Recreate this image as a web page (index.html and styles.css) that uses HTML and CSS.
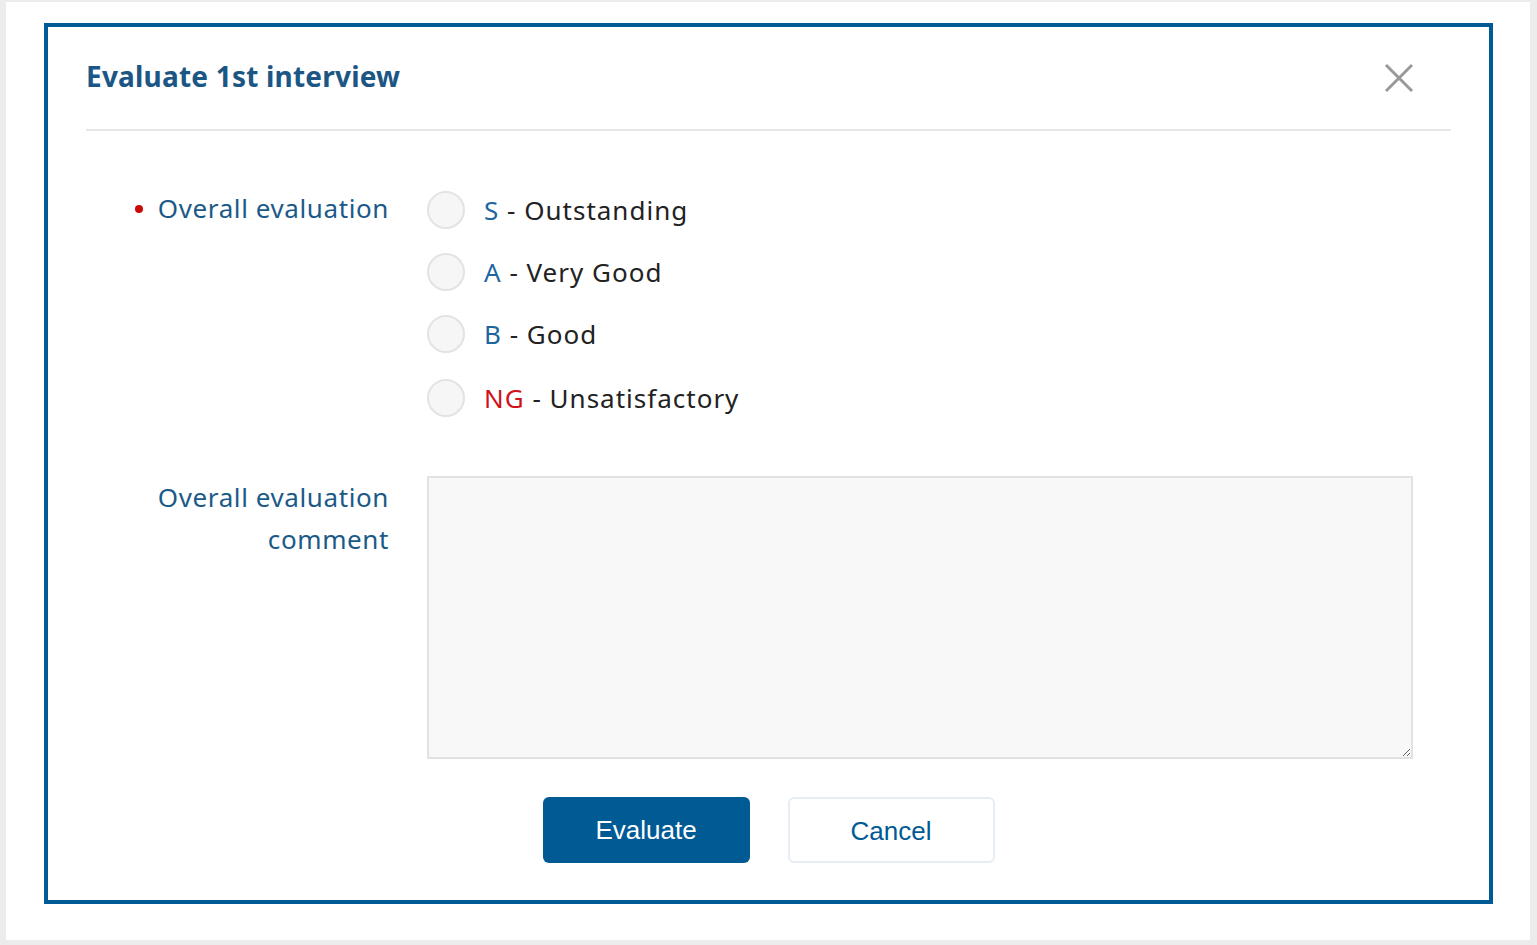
FILE: index.html
```html
<!DOCTYPE html>
<html>
<head>
    <meta charset="utf-8" />
    <title>Evaluate 1st interview</title>
    <link rel="stylesheet" href="styles.css">
</head>
<body>
    <div class="page">
        <div class="dialog">
            <div class="dialog_header">
                <h2>Evaluate 1st interview</h2>
                <button class="close_btn" type="button" aria-label="Close">
                    <svg width="30" height="30" viewBox="0 0 30 30">
                        <path d="M2 2 L28 28 M28 2 L2 28" stroke="#999" stroke-width="3" fill="none" />
                    </svg>
                </button>
            </div>

            <div class="form">
                <div class="label required">Overall evaluation</div>
                <div class="options">
                    <label class="option"><input type="radio" name="grade" value="S" /><span class="mark"></span><span class="grade">S</span>&nbsp;- Outstanding</label>
                    <label class="option"><input type="radio" name="grade" value="A" /><span class="mark"></span><span class="grade">A</span>&nbsp;- Very Good</label>
                    <label class="option"><input type="radio" name="grade" value="B" /><span class="mark"></span><span class="grade">B</span>&nbsp;- Good</label>
                    <label class="option last"><input type="radio" name="grade" value="NG" /><span class="mark"></span><span class="grade ng">NG</span>&nbsp;- Unsatisfactory</label>
                </div>

                <div class="label multi">Overall evaluation<br />comment</div>
                <textarea class="comment"></textarea>
            </div>

            <div class="buttons">
                <button type="button" class="btn btn_primary">Evaluate</button>
                <button type="button" class="btn btn_cancel">Cancel</button>
            </div>
        </div>
    </div>
</body>
</html>
```

FILE: styles.css
```css
* {
    font-family: "Noto Sans", "Open Sans", sans-serif;
    box-sizing: border-box;
}

body {
    margin: 0;
}

.page {
    width: 1537px;
    height: 945px;
    background-color: #fff;
    border-style: solid;
    border-color: #ececec;
    border-width: 2px 7px 5px 6px;
    padding: 21px 0 0 38px;
}

.dialog {
    width: 1449px;
    height: 881px;
    border: 4px solid #005a94;
    padding: 0 38px;
}

.dialog_header {
    height: 104px;
    display: flex;
    align-items: center;
    justify-content: space-between;
    border-bottom: 2px solid #e6e6e6;
}

h2 {
    margin: 0 0 4px 0;
    font-size: 28px;
    font-weight: bold;
    color: #1b5684;
    letter-spacing: 0.2px;
}

.close_btn {
    border: none;
    background: none;
    padding: 0;
    margin-right: 37px;
    width: 30px;
    height: 30px;
    cursor: pointer;
}

.form {
    display: grid;
    grid-template-columns: 303px 986px;
    column-gap: 38px;
    row-gap: 59px;
    padding-top: 60px;
}

.label {
    text-align: right;
    font-size: 26px;
    color: #1b5a88;
    line-height: 38px;
    letter-spacing: 0.6px;
}

.label.multi {
    line-height: 42px;
}

.required {
    margin-top: -2px;
}

.required::before {
    content: "";
    display: inline-block;
    width: 8px;
    height: 8px;
    border-radius: 50%;
    background-color: #cc0a0a;
    margin-right: 15px;
    vertical-align: middle;
    position: relative;
    top: -2px;
}

.options {
    display: flex;
    flex-direction: column;
    gap: 24px;
}

.option {
    display: flex;
    align-items: center;
    height: 38px;
    font-size: 26px;
    color: #222;
    letter-spacing: 1px;
    cursor: pointer;
}

.option.last {
    margin-top: 2px;
}

.option input {
    display: none;
}

.mark {
    width: 38px;
    height: 38px;
    border-radius: 50%;
    border: 2px solid #e3e3e3;
    background-color: #f6f6f6;
    margin-right: 19px;
}

.option input:checked + .mark {
    border: 11px solid #005a94;
    background-color: #fff;
}

.grade {
    color: #1d66a0;
}

    .grade.ng {
        color: #d0121b;
    }

.comment {
    width: 986px;
    height: 283px;
    border: 2px solid #e2e2e2;
    background-color: #f8f8f8;
    font-size: 22px;
    resize: vertical;
}

.buttons {
    display: flex;
    justify-content: center;
    gap: 38px;
    margin-top: 38px;
}

.btn {
    width: 207px;
    height: 66px;
    border-radius: 6px;
    font-family: "Liberation Sans", Arial, sans-serif;
    font-size: 26px;
    cursor: pointer;
}

.btn_primary {
    background-color: #005a94;
    border: none;
    color: #fff;
}

.btn_cancel {
    background-color: #fff;
    border: 2px solid #e6edf4;
    color: #005a94;
    padding-top: 4px;
}
```
